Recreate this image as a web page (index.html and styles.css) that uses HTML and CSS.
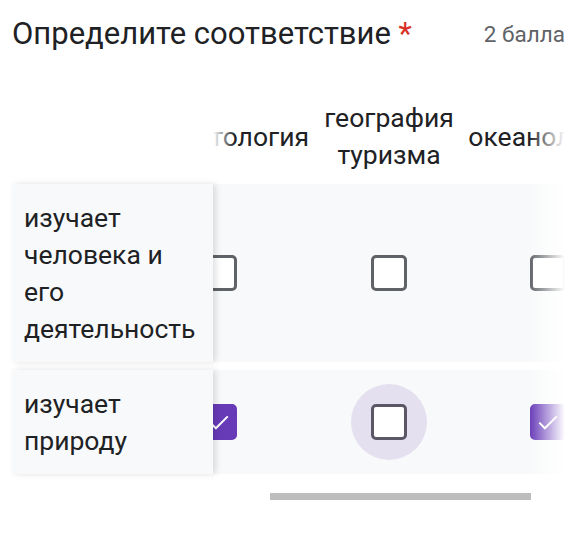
FILE: index.html
```html
<!DOCTYPE html>
<html lang="ru">
<head>
  <meta charset="UTF-8" />
  <meta name="viewport" content="width=device-width, initial-scale=1.0" />
  <title>Определите соответствие</title>
  <link rel="stylesheet" href="styles.css">
</head>
<body>
  <div class="question">
    <div class="q-head">
      <div class="q-title">Определите соответствие <span class="req">*</span></div>
      <div class="q-points">2 балла</div>
    </div>

    <div class="grid">
      <div class="grid-row header-row">
        <div class="row-label"></div>
        <div class="viewport">
          <div class="track">
            <div class="cell col-1">палеонтология</div>
            <div class="cell col-2">география туризма</div>
            <div class="cell col-3">океанология</div>
          </div>
        </div>
      </div>

      <div class="grid-row body-row">
        <div class="row-label">изучает человека и его деятельность</div>
        <div class="viewport">
          <div class="track">
            <div class="cell col-1"><span class="box"></span></div>
            <div class="cell col-2"><span class="box"></span></div>
            <div class="cell col-3"><span class="box"></span></div>
          </div>
        </div>
      </div>

      <div class="grid-row body-row">
        <div class="row-label">изучает природу</div>
        <div class="viewport">
          <div class="track">
            <div class="cell col-1">
              <span class="box checked">
                <svg viewBox="0 0 24 24"><path d="M5 12.5l4.5 4.5L19 7.5" /></svg>
              </span>
            </div>
            <div class="cell col-2"><span class="box focused"></span></div>
            <div class="cell col-3">
              <span class="box checked">
                <svg viewBox="0 0 24 24"><path d="M5 12.5l4.5 4.5L19 7.5" /></svg>
              </span>
            </div>
          </div>
        </div>
      </div>

      <div class="scrollbar"></div>
    </div>
  </div>
</body>
</html>
```

FILE: styles.css
```css
body {
  font-family: Roboto, "Noto Sans", Arial, sans-serif;
  color: #202124;
  background-color: #fff;
  margin: 0;
  padding: 0;
}
.question {
  padding: 14px 11px 0 12px;
}
.q-head {
  display: flex;
  justify-content: space-between;
  align-items: center;
}
.q-title {
  font-size: 31px;
  line-height: 40px;
}
.req {
  color: #d93025;
}
.q-points {
  font-size: 22.5px;
  color: #5f6368;
}
.grid {
  margin-top: 45px;
  font-size: 26.5px;
  line-height: 37px;
}
.grid-row {
  display: flex;
}
.header-row {
  margin-bottom: 11px;
}
.body-row {
  background-color: #f8f9fa;
  margin-bottom: 8px;
}
.row-label {
  width: 201px;
  flex-shrink: 0;
  box-sizing: border-box;
  padding: 15px 12px;
  position: relative;
  z-index: 2;
}
.body-row .row-label {
  background-color: #f8f9fa;
  box-shadow: 3px 0 6px rgba(0,0,0,0.12);
}
.header-row .row-label {
  padding: 0;
}
.viewport {
  flex: 1;
  overflow: hidden;
  position: relative;
  display: flex;
}
.viewport::before,
.viewport::after {
  content: "";
  position: absolute;
  top: 0;
  bottom: 0;
  z-index: 1;
}
.header-row .viewport::before {
  left: 0;
  width: 22px;
  background: linear-gradient(to right, #fff, rgba(255,255,255,0));
}
.viewport::after {
  right: 0;
  width: 36px;
  background: linear-gradient(to right, rgba(255,255,255,0), #fff);
}
.track {
  display: flex;
  margin-left: -84px;
}
.cell {
  display: flex;
  align-items: center;
  justify-content: center;
  text-align: center;
  flex-shrink: 0;
  isolation: isolate;
}
.col-1 { width: 180px; padding-right: 0; }
.col-2 { width: 160px; }
.col-3 { width: 158px; }
.header-row .col-1 {
  box-sizing: border-box;
  padding-right: 8px;
}
.box {
  width: 36px;
  height: 36px;
  box-sizing: border-box;
  border: 3px solid #5f6368;
  border-radius: 5px;
  background-color: #fff;
  position: relative;
  display: flex;
  align-items: center;
  justify-content: center;
}
.box.focused {
  border-color: #5b5766;
}
.box.focused::before {
  content: "";
  position: absolute;
  left: 50%;
  top: 50%;
  width: 76px;
  height: 76px;
  margin: -38px 0 0 -38px;
  border-radius: 50%;
  background-color: #e4e0f0;
  z-index: -1;
}
.box.checked {
  background-color: #673ab7;
  border-color: #673ab7;
}
.box svg {
  width: 30px;
  height: 30px;
  fill: none;
  stroke: #fff;
  stroke-width: 1.6;
}
.scrollbar {
  margin: 19px 0 0 258px;
  width: 261px;
  height: 7px;
  background-color: #bdbdbd;
}
```
